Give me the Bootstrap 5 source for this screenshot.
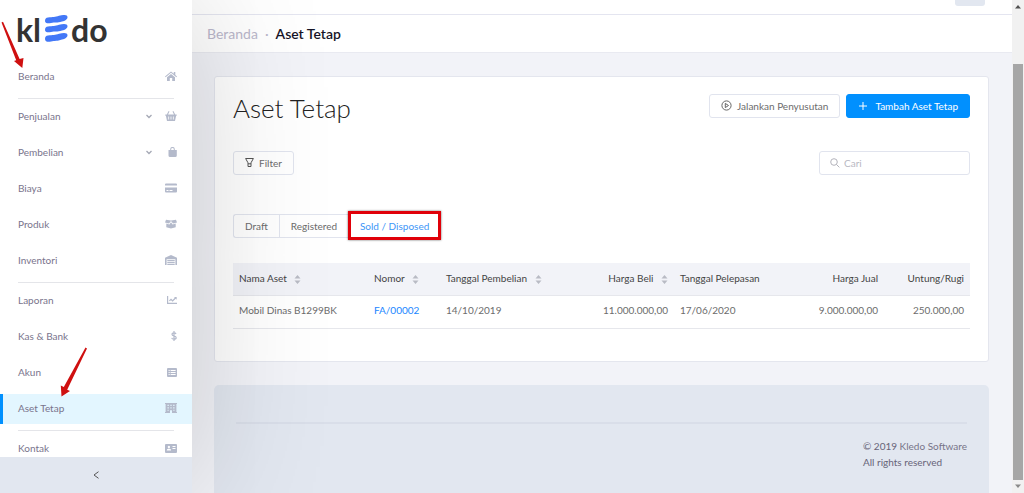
<!DOCTYPE html>
<html lang="id">
<head>
<meta charset="utf-8">
<meta name="viewport" content="width=device-width, initial-scale=1">
<title>Aset Tetap - Kledo</title>
<link href="https://cdn.jsdelivr.net/npm/bootstrap@5.3.0/dist/css/bootstrap.min.css" rel="stylesheet">
<style>
body { font: 400 10px/16px Lato, "Open Sans", sans-serif; color: #6c6c6c; background: #f2f3f8; }
/* sidebar */
.side { width: 192px; z-index: 2; box-shadow: 0 0 140px rgba(0,0,0,.19); }
.brand { height: 62px; padding: 12px 0 0 16px; color: #333; font-size: 32px; line-height: 36px; font-weight: 700; }
.brand svg { margin: 3px 3px 0 4px; }
.menu-item { height: 30px; margin-bottom: 6px; padding: 0 15px 2px 18px; color: #79748c; text-decoration: none; flex-shrink: 0; }
.menu-item svg { fill: #b4bacb; }
.menu-item .chev { fill: none; stroke: #a5a8b5; margin-right: 13px; }
.menu-item.current { background: #e3f6ff; border-left: 3px solid #0190fe; padding-left: 15px; }
.menu-rule { margin: 0 18px 3px; border-top: 1px solid #e4e5e9; opacity: 1; flex-shrink: 0; }
.fold { height: 36px; background: #e2e7f0; border: 0; color: #555; flex-shrink: 0; }
/* page */
.topbar { height: 15px; border-bottom: 1px solid #e4e5f0; padding-right: 27px; }
.avatar-tile { width: 30px; height: 6px; background: #e2e7f0; border-radius: 0 0 3px 3px; }
.crumbs { height: 38px; padding: 0 15px; font-size: 14px; border-bottom: 1px solid #e9eaf1; }
.crumbs a, .crumb-dot { color: #bab7cb; text-decoration: none; }
.crumb-dot { padding: 0 7px; }
.crumbs strong { color: #161427; font-weight: 600; }
.content-area { padding: 23px 23px 0 22px; }
.panel-box { padding: 17px 18px 32px; border: 1px solid #e4e6ee; border-radius: 3px; }
h1 { font-size: 26px; line-height: 28px; font-weight: 300; color: #222; }
.act { height: 24px; padding: 0 11px 1px; font-size: 10px; line-height: 14px; border: 1px solid #e1e4ee; border-radius: 3px; color: #6c6c6c; background: transparent; white-space: nowrap; }
.act svg { margin-right: 5px; }
.act.primary { background: #0190fe; border-color: #0190fe; color: #fff; }
.act.primary svg { margin-left: 1px; margin-right: 8px; }
.act-group { gap: 6px; }
.tools-row { margin-top: 29px; }
.search { width: 151px; height: 24px; border: 1px solid #e1e4ee; border-radius: 3px; padding: 0 10px; }
.search input { font-size: 10px; line-height: 14px; background: transparent; }
.search input::placeholder { color: #b8b8c2; opacity: 1; }
.tabs-row { margin-top: 39px; }
.tab { height: 24px; padding: 0 11px 1px; border: 1px solid #e1e4ee; border-right: 0; background: transparent; color: #6c6c6c; }
.tab:first-child { border-radius: 3px 0 0 3px; }
.tab.on { color: #4096f7; width: 93px; }
.callout-frame { inset: -3px 0 -2px; border: 3px solid #e00009; box-shadow: 0 0 2px rgba(0,0,0,.6); }
.assets { table-layout: fixed; margin: 25px 0 0; font-size: 10px; }
.assets th, .assets td { padding: 6px 6px 9px; height: 32px; font-weight: 400; background: transparent; border-bottom: 1px solid #e6e7ec; white-space: nowrap; }
.assets th { color: #444; background: #f2f3f8; box-shadow: none; }
.assets td { color: #6c6c6c; height: 33px; }
.assets a { color: #1a86ff; text-decoration: none; }
.sorter { fill: #b9bbc4; margin-left: 5px; margin-top: 2px; }
.c-name { width: 135px; } .c-no { width: 72px; } .c-buy { width: 150px; } .c-price { width: 84px; } .c-sell { width: 104px; } .c-gain { width: 86px; }
.foot { margin-top: 23px; padding: 37px 22px 0; background: #e2e7f0; border-radius: 5px 5px 0 0; color: #676478; }
.foot hr { margin: 0 0 14px; border-top: 2px solid #d9dee9; opacity: 1; }
.foot a { color: #777488; text-decoration: none; }
/* scrollbar */
.bar { width: 12px; background: #f1f1f1; padding: 5px 1px; }
.bar-thumb { margin-top: 55px; margin-bottom: 4px; background: #a6a6a6; }
.pointer { z-index: 3; pointer-events: none; }
</style>
</head>
<body>
<div class="d-flex vh-100 overflow-hidden position-relative">
  <aside class="side d-flex flex-column bg-white position-relative flex-shrink-0">
    <div class="brand d-flex align-items-start flex-shrink-0" aria-label="kledo"><span>kl</span><svg width="23" height="27" viewBox="0 0 23 27" fill="#4378f7"><path d="M0 6C0 3.500 1 2.800 3 2.500 8 2 10 2.200 14 .8 19-.6 22.500-.2 22.500 2 22.500 4.500 20 5.800 17 6.600 12 8.200 10 7.200 6 8 2.500 8.800 0 8 0 6Z"/><path d="M0 15C0 12.500 1 11.800 3 11.500 8 11 10 11.200 14 9.800 19 8.400 22.500 8.800 22.500 11 22.500 13.500 20 14.800 17 15.600 12 17.200 10 16.200 6 17 2.500 17.800 0 17 0 15Z"/><path d="M0 24C0 21.500 1 20.800 3 20.500 8 20 10 20.200 14 18.800 19 17.400 22.500 17.800 22.500 20 22.500 22.500 20 23.800 17 24.600 12 26.200 10 25.800 6 26.600 2.500 27.200 0 26.500 0 24Z"/></svg><span>do</span></div>
    <nav class="d-flex flex-column flex-fill overflow-hidden">
      <a class="menu-item d-flex align-items-center" href="#"><span class="me-auto">Beranda</span><svg width="12" height="10" viewBox="0 0 12 10"><path d="M6 .5 0 5.500l.6.7L6 1.800l5.400 4.400.6-.7-1.700-1.400V1H8.800v1.800zM6 2.900 2 6.200V10h2.800V7h2.400v3H10V6.200z"/></svg></a>
      <hr class="menu-rule">
      <a class="menu-item d-flex align-items-center" href="#"><span class="me-auto">Penjualan</span><svg class="chev" width="6" height="5" viewBox="0 0 6 5"><path stroke-width="1.300" d="M.5 1 3 3.500 5.500 1"/></svg><svg width="12" height="10" viewBox="0 0 12 10"><path fill-rule="evenodd" d="M3.600 0 1.800 3.500H.3v1.300h.6L2 10h8l1.100-5.200h.6V3.500h-1.500L8.400 0l-.9.500L9 3.500H3L4.500.5zM3.300 5.500h.8v3h-.8zm2.300 0h.8v3h-.8zm2.300 0h.8v3h-.8z"/></svg></a>
      <a class="menu-item d-flex align-items-center" href="#"><span class="me-auto">Pembelian</span><svg class="chev" width="6" height="5" viewBox="0 0 6 5"><path stroke-width="1.300" d="M.5 1 3 3.500 5.500 1"/></svg><svg width="12" height="10" viewBox="0 0 12 10"><path fill-rule="evenodd" d="M3.500 3h1.700V2.200a2.300 2.300 0 0 1 4.600 0V3H11.800v5.500Q11.800 10 10.300 10h-5.300Q3.500 10 3.500 8.500zm2.700 0h2.600V2.200a1.300 1.300 0 0 0-2.600 0z"/></svg></a>
      <a class="menu-item d-flex align-items-center" href="#"><span class="me-auto">Biaya</span><svg width="12" height="10" viewBox="0 0 12 10"><path fill-rule="evenodd" d="M1 .5h10q1 0 1 1v1H0v-1q0-1 1-1zM0 4.500h12v4q0 1-1 1H1q-1 0-1-1zM1.500 7v1h2V7zm3 0v1h3V7z"/></svg></a>
      <a class="menu-item d-flex align-items-center" href="#"><span class="me-auto">Produk</span><svg width="12" height="10" viewBox="0 0 12 10"><path d="M1 .8 6 1.500 11 .8l1 2.600-4 1.200L6 1.900 4 4.600 0 3.400zM1.300 4.600l3.100 1L6 3.300l1.600 2.300 3.100-1V8.200L6 9.500 1.300 8.200z"/></svg></a>
      <a class="menu-item d-flex align-items-center" href="#"><span class="me-auto">Inventori</span><svg width="12" height="10" viewBox="0 0 12 10"><path d="M6 0 12 2.700V10h-1.600V4.200H1.600V10H0V2.700zM2.300 5h7.400v1.200H2.300zm0 1.900h7.400v1.200H2.300zm0 1.900h7.400V10H2.300z"/></svg></a>
      <hr class="menu-rule">
      <a class="menu-item d-flex align-items-center" href="#"><span class="me-auto">Laporan</span><svg width="10" height="8" viewBox="0 0 10 8"><path d="M0 0h1.200v6.800H10V8H0zM2 4.400l2-2 1.600 1.500L7.800 1.800 7 1h2.700v2.700l-1-.9-3.100 3L4 4.200 2.700 5.300z"/></svg></a>
      <a class="menu-item d-flex align-items-center" href="#"><span class="me-auto">Kas &amp; Bank</span><svg width="6" height="10" viewBox="0 0 6 10"><path d="M5 3Q4.600 1.900 3 1.900 1 1.900 1 3.300 1 4.600 3 5 5.200 5.400 5.200 6.800 5.200 8.200 3 8.200 1 8.200.7 6.900M3 0v10" fill="none" stroke="#b4bacb" stroke-width="1.200"/></svg></a>
      <a class="menu-item d-flex align-items-center" href="#"><span class="me-auto">Akun</span><svg width="10" height="9" viewBox="0 0 10 9"><path fill-rule="evenodd" d="M1 0h8q1 0 1 1v7q0 1-1 1H1Q0 9 0 8V1q0-1 1-1zm.6 2v1.100h1.100V2zm2 0v1.100h5V2zm-2 2v1.100h1.100V4zm2 0v1.100h5V4zm-2 2v1.100h1.100V6zm2 0v1.100h5V6z"/></svg></a>
      <a class="menu-item current d-flex align-items-center" href="#" aria-current="page"><span class="me-auto">Aset Tetap</span><svg width="12" height="10" viewBox="0 0 12 10"><path fill-rule="evenodd" d="M0 0h12v1h-.6v8h.6v1H7V8a1 1 0 0 0-2 0v2H0V9h.6V1H0zm2.500 1.700v1.200h1.300V1.700zm2.900 0v1.200h1.200V1.700zm2.800 0v1.200h1.300V1.700zM2.500 4.200v1.200h1.300V4.200zm2.900 0v1.200h1.200V4.200zm2.800 0v1.200h1.300V4.200zM2.500 6.700v1h1.200v-1zm5.800 0v1h1.200v-1z"/></svg></a>
      <hr class="menu-rule">
      <a class="menu-item d-flex align-items-center" href="#"><span class="me-auto">Kontak</span><svg width="12" height="9" viewBox="0 0 12 9"><path fill-rule="evenodd" d="M1 0h10q1 0 1 1v7q0 1-1 1H1Q0 9 0 8V1q0-1 1-1zm2.900 1.800a1.200 1.200 0 1 0 .01 0zM1.700 6.500h4.400q0-1.700-1.500-1.700H3.200q-1.500 0-1.500 1.700zM7.500 2v1h3V2zm0 2v1h3V4z"/></svg></a>
    </nav>
    <button class="fold d-flex align-items-center justify-content-center" type="button" aria-label="Ciutkan menu"><svg width="6" height="8" viewBox="0 0 6 8" fill="none" stroke="#555"><path d="M5.500.7 1 4l4.500 3.300"/></svg></button>
  </aside>

  <main class="flex-fill d-flex flex-column overflow-hidden">
    <div class="topbar bg-white d-flex justify-content-end flex-shrink-0"><span class="avatar-tile"></span></div>
    <nav class="crumbs bg-white d-flex align-items-center flex-shrink-0" aria-label="breadcrumb"><a href="#">Beranda</a><span class="crumb-dot">·</span><strong>Aset Tetap</strong></nav>
    <div class="content-area d-flex flex-column flex-fill">
      <section class="panel-box bg-white">
        <div class="d-flex justify-content-between align-items-start">
          <h1 class="m-0">Aset Tetap</h1>
          <div class="act-group d-flex">
            <button type="button" class="act d-flex align-items-center"><svg width="11" height="11" viewBox="0 0 11 11" fill="none" stroke="#666"><circle cx="5.500" cy="5.500" r="4.600"/><path d="M4.300 3.400 7.500 5.500 4.300 7.600Z"/></svg>Jalankan Penyusutan</button>
            <button type="button" class="act primary d-flex align-items-center"><svg width="8" height="8" viewBox="0 0 8 8" stroke="#fff"><path d="M4 0v8M0 4h8"/></svg>Tambah Aset Tetap</button>
          </div>
        </div>
        <div class="tools-row d-flex justify-content-between">
          <button type="button" class="act d-flex align-items-center"><svg width="9" height="9" viewBox="0 0 9 9" fill="none" stroke="#555"><path d="M.6.5h7.800L6 4.800v3.700H3V4.800ZM3 5.800h3"/></svg>Filter</button>
          <label class="search d-flex align-items-center gap-1"><svg class="flex-shrink-0" width="10" height="10" viewBox="0 0 10 10" fill="none" stroke="#b3b3bb"><circle cx="4" cy="4" r="3.300"/><path d="m6.400 6.400 3 3"/></svg><input class="form-control border-0 p-0 shadow-none" type="text" placeholder="Cari" aria-label="Cari"></label>
        </div>
        <div class="tabs-row d-flex">
          <button type="button" class="tab">Draft</button>
          <button type="button" class="tab">Registered</button>
          <button type="button" class="tab on border-0 position-relative">Sold / Disposed<span class="callout-frame position-absolute"></span></button>
        </div>
        <table class="assets table">
          <colgroup><col class="c-name"><col class="c-no"><col class="c-buy"><col class="c-price"><col><col class="c-sell"><col class="c-gain"></colgroup>
          <thead><tr>
            <th scope="col">Nama Aset <svg class="sorter" width="7" height="9" viewBox="0 0 7 9"><path d="M3.500 0 6.500 3.500h-6zM3.500 9l3-3.500h-6z"/></svg></th>
            <th scope="col">Nomor <svg class="sorter" width="7" height="9" viewBox="0 0 7 9"><path d="M3.500 0 6.500 3.500h-6zM3.500 9l3-3.500h-6z"/></svg></th>
            <th scope="col">Tanggal Pembelian <svg class="sorter" width="7" height="9" viewBox="0 0 7 9"><path d="M3.500 0 6.500 3.500h-6zM3.500 9l3-3.500h-6z"/></svg></th>
            <th scope="col" class="text-end">Harga Beli <svg class="sorter" width="7" height="9" viewBox="0 0 7 9"><path d="M3.500 0 6.500 3.500h-6zM3.500 9l3-3.500h-6z"/></svg></th>
            <th scope="col">Tanggal Pelepasan</th>
            <th scope="col" class="text-end">Harga Jual</th>
            <th scope="col" class="text-end">Untung/Rugi</th>
          </tr></thead>
          <tbody><tr>
            <td>Mobil Dinas B1299BK</td><td><a href="#">FA/00002</a></td><td>14/10/2019</td><td class="text-end">11.000.000,00</td><td>17/06/2020</td><td class="text-end">9.000.000,00</td><td class="text-end">250.000,00</td>
          </tr></tbody>
        </table>
      </section>
      <footer class="foot flex-fill">
        <hr>
        <div class="d-flex justify-content-end"><div>© 2019 <a href="#">Kledo Software</a><br>All rights reserved</div></div>
      </footer>
    </div>
  </main>

  <div class="bar d-flex flex-column align-items-center flex-shrink-0" aria-hidden="true">
    <svg width="6" height="4" viewBox="0 0 6 4" fill="#505050"><path d="M3 0 6 3.500H0z"/></svg>
    <div class="bar-thumb w-100 flex-fill"></div>
    <svg width="6" height="4" viewBox="0 0 6 4" fill="#8a8a8a"><path d="M3 4 6 .5H0z"/></svg>
  </div>

  <svg class="pointer position-absolute top-0 start-0" width="100" height="400" viewBox="0 0 100 400" fill="#cf1010" aria-hidden="true">
    <path d="M1.500 22.500 3 21.800 19.600 59 23.500 58 22.300 68 14 61 16.200 60.300Z"/>
    <path d="M87 348.500 85.500 347.500 63.800 387 60.800 385.500 61.500 396.500 70 391 67.200 389.800Z"/>
  </svg>
</div>
<script src="https://cdn.jsdelivr.net/npm/bootstrap@5.3.0/dist/js/bootstrap.bundle.min.js"></script>
</body>
</html>
